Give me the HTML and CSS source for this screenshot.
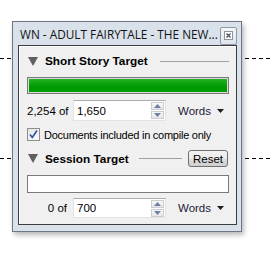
FILE: index.html
```html
<!DOCTYPE html>
<html>
<head>
<meta charset="utf-8">
<link rel="stylesheet" href="styles.css">
</head>
<body>
<div class="canvas">
  <div class="dash dash-top"></div>
  <div class="dash dash-bottom"></div>
  <div class="window">
    <div class="titlebar">
      <span class="title">WN - ADULT FAIRYTALE - THE NEW...</span>
      <div class="close">
        <svg width="9" height="9" viewBox="0 0 9 9"><rect x="0.5" y="0.5" width="8" height="8" fill="#fff" stroke="#8c959e"/><path d="M2.5 2.5 L6.5 6.5 M6.5 2.5 L2.5 6.5" stroke="#4d5257" stroke-width="1.3"/></svg>
      </div>
    </div>
    <div class="panel">
      <div class="section-head">
        <svg class="tri" width="10" height="9" viewBox="0 0 10 9"><path d="M0 0 H10 L5 9 Z" fill="#5f5f5f"/></svg>
        <span class="head-text">Short Story Target</span>
        <div class="rule"></div>
      </div>
      <div class="bar full"></div>
      <div class="row row-one">
        <span class="count">2,254 of</span>
        <div class="spin">
          <span class="spin-value">1,650</span>
          <div class="arrows">
            <div class="arrow"><svg width="7" height="4" viewBox="0 0 7 4"><path d="M0 4 L3.5 0 L7 4 Z" fill="#6b80a8"/></svg></div>
            <div class="arrow"><svg width="7" height="4" viewBox="0 0 7 4"><path d="M0 0 L3.5 4 L7 0 Z" fill="#6b80a8"/></svg></div>
          </div>
        </div>
        <span class="unit">Words</span>
        <svg class="caret" width="7" height="4" viewBox="0 0 7 4"><path d="M0 0 H7 L3.5 4 Z" fill="#1e1e1e"/></svg>
      </div>
      <div class="check-row">
        <div class="checkbox"><svg width="11" height="11" viewBox="0 0 11 11"><path d="M2 5.5 L4.3 8.5 L9 1.5" fill="none" stroke="#2f4fa8" stroke-width="1.6"/></svg></div>
        <span class="check-label">Documents included in compile only</span>
      </div>
      <div class="section-head head-two">
        <svg class="tri" width="10" height="9" viewBox="0 0 10 9"><path d="M0 0 H10 L5 9 Z" fill="#5f5f5f"/></svg>
        <span class="head-text">Session Target</span>
        <div class="rule short"></div>
        <div class="reset">Reset</div>
      </div>
      <div class="bar empty"></div>
      <div class="row row-two">
        <span class="count">0 of</span>
        <div class="spin">
          <span class="spin-value">700</span>
          <div class="arrows">
            <div class="arrow"><svg width="7" height="4" viewBox="0 0 7 4"><path d="M0 4 L3.5 0 L7 4 Z" fill="#6b80a8"/></svg></div>
            <div class="arrow"><svg width="7" height="4" viewBox="0 0 7 4"><path d="M0 0 L3.5 4 L7 0 Z" fill="#6b80a8"/></svg></div>
          </div>
        </div>
        <span class="unit">Words</span>
        <svg class="caret" width="7" height="4" viewBox="0 0 7 4"><path d="M0 0 H7 L3.5 4 Z" fill="#1e1e1e"/></svg>
      </div>
    </div>
  </div>
</div>
</body>
</html>
```

FILE: styles.css
```css
html, body {
  margin: 0;
  padding: 0;
  background: #ffffff;
}

body {
  font-family: "Liberation Sans", Arial, sans-serif;
  font-size: 11px;
  color: #000;
}

.canvas {
  position: relative;
  width: 273px;
  height: 260px;
  overflow: hidden;
}

.dash {
  position: absolute;
  left: 0;
  width: 273px;
  height: 1px;
  background: repeating-linear-gradient(90deg, #000 0 4px, transparent 4px 7px);
}

.dash-top { top: 58px; }
.dash-bottom { top: 158px; }

.window {
  position: absolute;
  left: 12px;
  top: 21px;
  box-sizing: border-box;
  width: 230px;
  height: 211px;
  border: 1px solid #6d7680;
  background: #d9e2eb;
  box-shadow: 2px 3px 5px rgba(0, 0, 0, 0.28);
  display: flex;
  flex-direction: column;
  padding: 0 4px 6px 5px;
}

.titlebar {
  height: 23px;
  flex: 0 0 23px;
  display: flex;
  align-items: center;
  justify-content: space-between;
  padding-left: 2px;
}

.title {
  font-family: "Open Sans", "Noto Sans", sans-serif;
  font-size: 11.8px;
  color: #111;
  white-space: nowrap;
  margin-top: 1px;
}

.close {
  width: 17px;
  height: 18px;
  box-sizing: border-box;
  border: 1px solid #8f99a4;
  border-radius: 2px;
  background: linear-gradient(#f4f6f8, #dfe5eb);
  display: flex;
  align-items: center;
  justify-content: center;
  margin-top: 4px;
}

.panel {
  flex: 0 0 180px;
  box-sizing: border-box;
  border: 1px solid #3d3d3d;
  box-shadow: inset 1px 1px 0 #fff;
  background: #f0f0f0;
  padding: 7px 7px 0 8px;
  display: flex;
  flex-direction: column;
}

.section-head {
  height: 16px;
  display: flex;
  align-items: center;
}

.tri {
  margin-left: 1px;
  margin-right: 7px;
}

.head-text {
  font-weight: bold;
  font-size: 11.8px;
  white-space: nowrap;
}

.rule {
  flex: 1;
  height: 1px;
  background: #a0a0a0;
  margin-left: 12px;
}

.rule.short {
  flex: 0 0 43px;
  margin-left: auto;
  margin-right: 6px;
}

.head-two {
  height: 17px;
  margin-top: 9px;
}

.reset {
  width: 40px;
  height: 17px;
  box-sizing: border-box;
  border: 1px solid #707070;
  border-radius: 3px;
  background: linear-gradient(#f2f2f2 0, #ebebeb 50%, #dddddd 51%, #cfcfcf 100%);
  display: flex;
  align-items: center;
  justify-content: center;
  font-size: 11.5px;
  margin-right: 1px;
}

.bar {
  height: 15px;
  border: 1px solid #7a7a7a;
  margin-top: 8px;
}

.bar.full {
  background: linear-gradient(#2fb62f 0, #10a910 30%, #009800 60%, #00a000 100%);
  box-shadow: inset 0 0 0 1px #d8d8d8;
}

.bar.empty {
  height: 16px;
  background: #fff;
}

.row {
  display: flex;
  align-items: center;
  height: 21px;
}

.row-one { margin-top: 6px; }
.row-two { margin-top: 5px; height: 20px; }

.count {
  width: 40px;
  text-align: right;
  white-space: nowrap;
  font-size: 11.5px;
}

.spin {
  margin-left: 6px;
  width: 93px;
  height: 100%;
  box-sizing: border-box;
  border: 1px solid #e3e3e3;
  border-top-color: #abadb3;
  border-left-color: #e2e3ea;
  background: #fff;
  display: flex;
  align-items: center;
  justify-content: space-between;
  padding-left: 3px;
  padding-right: 1px;
}

.spin-value {
  font-size: 11.5px;
}

.arrows {
  display: flex;
  flex-direction: column;
  gap: 1px;
  height: 17px;
}

.arrow {
  width: 13px;
  height: 8px;
  border: 1px solid #c9cdd4;
  box-sizing: border-box;
  background: linear-gradient(#f7f7f7, #e6e6e6);
  display: flex;
  align-items: center;
  justify-content: center;
}

.unit {
  margin-left: 12px;
  font-size: 11.5px;
  color: #1b1b3a;
}

.caret {
  margin-left: auto;
  margin-right: 5px;
}

.check-row {
  display: flex;
  align-items: center;
  margin-top: 7px;
  height: 13px;
}

.checkbox {
  width: 11px;
  height: 11px;
  border: 1px solid #8e8f8f;
  background: linear-gradient(135deg, #e4e4e4, #fbfbfb);
  display: flex;
  align-items: center;
  justify-content: center;
}

.check-label {
  margin-left: 4px;
  font-size: 11px;
  letter-spacing: -0.25px;
  white-space: nowrap;
}
```
